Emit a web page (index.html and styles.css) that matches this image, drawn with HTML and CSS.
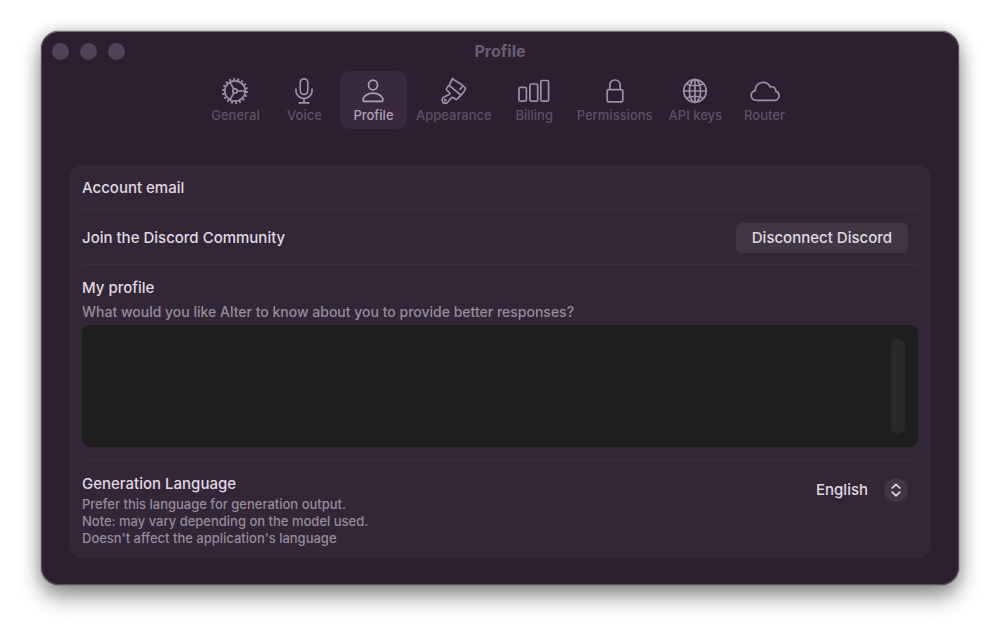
FILE: index.html
```html
<!DOCTYPE html>
<html lang="en">

<head>
    <meta charset="utf-8">
    <title>Profile</title>
    <link rel="stylesheet" href="styles.css">
</head>

<body>
    <main class="window">
        <header class="titlebar">
            <div class="window-buttons">
                <button type="button" class="window-button" aria-label="Close"></button>
                <button type="button" class="window-button" aria-label="Minimize"></button>
                <button type="button" class="window-button" aria-label="Zoom"></button>
            </div>
            <h1 class="title">Profile</h1>
        </header>

        <nav class="tabs">
            <a class="tab" href="#general">
                <svg class="icon" viewBox="0 0 32 28">
                    <!-- Teeth -->
                    <circle cx="16" cy="14" r="11.9" stroke-width="2.2" stroke-dasharray="1.9 2.25" />
                    <circle cx="16" cy="14" r="10.2" />
                    <circle cx="16" cy="14" r="2.2" />
                    <!-- Spokes -->
                    <path d="M18.2 14H26M14.9 12.1L11 5.4M14.9 15.9L11 22.6" />
                </svg>
                <span>General</span>
            </a>
            <a class="tab" href="#voice">
                <svg class="icon" viewBox="0 0 32 28">
                    <rect x="12.2" y="1.8" width="7.6" height="15.6" rx="3.8" />
                    <path d="M7.9 11.5V13.5A8.1 8.1 0 0 0 24.1 13.5V11.5M16 21.6V25.7M10.5 25.9H21.5" />
                </svg>
                <span>Voice</span>
            </a>
            <a class="tab active" href="#profile">
                <svg class="icon" viewBox="0 0 32 28">
                    <ellipse cx="16" cy="8" rx="4.5" ry="4.9" />
                    <path d="M8 24.4C6.5 24.4 5.9 23.7 6.1 22.2C6.6 18.8 10.7 16.2 16 16.2S25.4 18.8 25.9 22.2C26.1 23.7 25.5 24.4 24 24.4Z" />
                </svg>
                <span>Profile</span>
            </a>
            <a class="tab" href="#appearance">
                <svg class="icon" viewBox="0 0 32 28">
                    <!-- Bristles and ferrule -->
                    <path d="M11.2 8.3L14.6 1.5C17.4 5.2 22.6 5.2 27.4 11.2C27.6 13 25.8 15.2 22.9 18.2Z" />
                    <path d="M24.2 9.2C24 10.4 23.2 11.6 21.6 12.8" />
                    <path d="M11.2 8.3L8.6 11.3C7.9 12.2 8.3 12.9 9.2 13.6L11.3 15.4C12.1 16.1 12 16.9 11.1 17.4L6.2 20.1C4.3 21.1 3.5 23 4.5 24.8C5.6 26.7 8.1 26.9 9.6 25.3L13.4 20.9C14.1 20.1 15 20.2 15.7 20.8L17.2 22C18 22.6 18.8 22.5 19.4 21.9L22.9 18.2" />
                    <circle cx="7.2" cy="23.2" r=".6" />
                </svg>
                <span>Appearance</span>
            </a>
            <a class="tab" href="#billing">
                <svg class="icon" viewBox="0 0 32 28">
                    <rect x="1" y="10.3" width="7.4" height="13.9" rx="1.4" />
                    <rect x="11.9" y="7" width="7.8" height="17.2" rx="1.4" />
                    <rect x="22.8" y="3.5" width="7.8" height="20.7" rx="1.4" />
                </svg>
                <span>Billing</span>
            </a>
            <a class="tab" href="#permissions">
                <svg class="icon" viewBox="0 0 32 28">
                    <rect x="8.2" y="12.6" width="15.6" height="12.2" rx="1.8" />
                    <path d="M10.8 12.6V8.8C10.8 5 13 3 16 3S21.2 5 21.2 8.8V12.6" />
                </svg>
                <span>Permissions</span>
            </a>
            <a class="tab" href="#api-keys">
                <svg class="icon" viewBox="0 0 32 28">
                    <circle cx="16" cy="14" r="11.3" />
                    <ellipse cx="16" cy="14" rx="5.6" ry="11.3" />
                    <path d="M16 2.7V25.3M4.7 14H27.3M7.5 6.8C12 9.4 20 9.4 24.5 6.8M7.5 21.2C12 18.6 20 18.6 24.5 21.2" />
                </svg>
                <span>API keys</span>
            </a>
            <a class="tab" href="#router">
                <svg class="icon" viewBox="0 0 32 28">
                    <path d="M8.2 23.4C4.7 23.4 2.2 21.3 2.2 18.4C2.2 15.9 3.9 14.2 6.2 13.7C6 8.9 9.5 5.4 14 5.4C17.4 5.4 19.8 7 21.1 9.8C25 9.3 27.1 11.8 26.9 14.4C29 15 30.1 16.7 30.1 18.7C30.1 21.4 27.9 23.4 25 23.4Z" />
                </svg>
                <span>Router</span>
            </a>
        </nav>

        <form class="card">
            <div class="row">
                <h2 class="label">Account email</h2>
            </div>

            <div class="row row-discord">
                <h2 class="label">Join the Discord Community</h2>
                <button type="button" class="button">Disconnect Discord</button>
            </div>

            <div class="row row-profile">
                <label class="label" for="my-profile">My profile</label>
                <p class="hint" id="profile-hint">What would you like Alter to know about you to provide better responses?</p>
                <div class="editor">
                    <textarea class="editor-input" id="my-profile" aria-describedby="profile-hint"></textarea>
                    <span class="scroller"></span>
                </div>
            </div>

            <div class="row row-language">
                <div>
                    <label class="label" for="language">Generation Language</label>
                    <p class="note">
                        Prefer this language for generation output.<br>
                        Note: may vary depending on the model used.<br>
                        Doesn't affect the application's language
                    </p>
                </div>
                <div class="picker">
                    <select class="picker-select" id="language">
                        <option>English</option>
                    </select>
                    <svg class="picker-icon" viewBox="0 0 24 24">
                        <circle cx="12" cy="12" r="12" />
                        <path d="M8.2 10L12 6.3L15.8 10M8.2 14.2L12 17.9L15.8 14.2" />
                    </svg>
                </div>
            </div>
        </form>
    </main>
</body>

</html>
```

FILE: styles.css
```css
* {
    box-sizing: border-box;
}

body {
    margin: 0;
    padding: 31px 41px 51px;
    background: #ffffff;
    color: #e0d9e2;
    font-family: Inter, "Liberation Sans", sans-serif;
    font-size: 15px;
    font-weight: 500;
    line-height: 20px;
}

h1,
h2,
p {
    margin: 0;
}

.window {
    padding: 0 27px 26px;
    background: #2c1f30;
    border: 1px solid #58545c;
    border-top-color: #77737b;
    border-radius: 18px;
    box-shadow: 0 0 1px #000000, 0 12px 22px rgba(0, 0, 0, 0.42), 0 0 16px rgba(0, 0, 0, 0.2);
}

/* Title bar */
.titlebar {
    display: grid;
    grid-template-columns: 1fr auto 1fr;
    align-items: center;
    height: 38px;
    margin: 0 -17px 1px;
}

.window-buttons {
    display: flex;
    gap: 11px;
}

.window-button {
    width: 17px;
    height: 17px;
    padding: 0;
    border: 0;
    border-radius: 50%;
    background: #514255;
}

.title {
    color: #6c5f70;
    font-size: 16px;
    font-weight: 700;
}

/* Toolbar */
.tabs {
    display: flex;
    justify-content: center;
    gap: 2px;
    margin-bottom: 36px;
}

.tab {
    display: flex;
    flex-direction: column;
    align-items: center;
    min-width: 67px;
    height: 58px;
    padding: 6px 7px 0;
    border-radius: 9px;
    color: #5e5163;
    font-size: 13px;
    text-decoration: none;
}

.tab.active {
    background: #38293f;
    color: #b09fb6;
}

.icon {
    width: 32px;
    height: 28px;
    fill: none;
    stroke: #a08fa6;
    stroke-width: 1.7;
    stroke-linejoin: round;
}

.tab.active .icon {
    stroke: #b09fb6;
}

/* Settings card */
.card {
    padding: 0 13px;
    background: #322737;
    border-radius: 13px;
}

.row {
    padding: 13px 0 11px;
}

.row + .row {
    border-top: 1px solid #3b3040;
}

.label {
    display: block;
    font-size: 15px;
    font-weight: 500;
}

.row-discord,
.row-language {
    display: flex;
    align-items: center;
    justify-content: space-between;
    padding-right: 10px;
}

.row-profile {
    padding-bottom: 13px;
}

.row-language {
    align-items: flex-start;
}

.button {
    height: 30px;
    padding: 0 16px;
    border: 0;
    border-radius: 6px;
    background: #403644;
    color: #e0d9e2;
    font: inherit;
}

.hint {
    padding: 4px 0 3px;
    color: #978b9b;
    font-size: 14px;
}

.editor {
    position: relative;
}

.editor-input {
    display: block;
    width: 100%;
    height: 122px;
    padding: 12px 28px 12px 12px;
    border: 0;
    border-radius: 8px;
    background: #1e1e1e;
    color: #e0d9e2;
    font: inherit;
    resize: none;
}

.scroller {
    position: absolute;
    top: 14px;
    right: 13px;
    bottom: 13px;
    width: 14px;
    border-radius: 7px;
    background: #292929;
}

.note {
    padding-top: 2px;
    color: #978b9b;
    font-size: 13px;
    line-height: 17px;
}

.picker {
    position: relative;
    padding-top: 4px;
}

.picker-select {
    display: block;
    height: 24px;
    padding: 0 39px 0 0;
    border: 0;
    background: none;
    color: #e0d9e2;
    font: inherit;
    appearance: none;
}

.picker-icon {
    position: absolute;
    right: 0;
    bottom: 0;
    width: 24px;
    height: 24px;
    fill: none;
    stroke: #e0d9e2;
    stroke-width: 1.7;
    stroke-linecap: round;
    stroke-linejoin: round;
    pointer-events: none;
}

.picker-icon circle {
    fill: #403644;
    stroke: none;
}
```
